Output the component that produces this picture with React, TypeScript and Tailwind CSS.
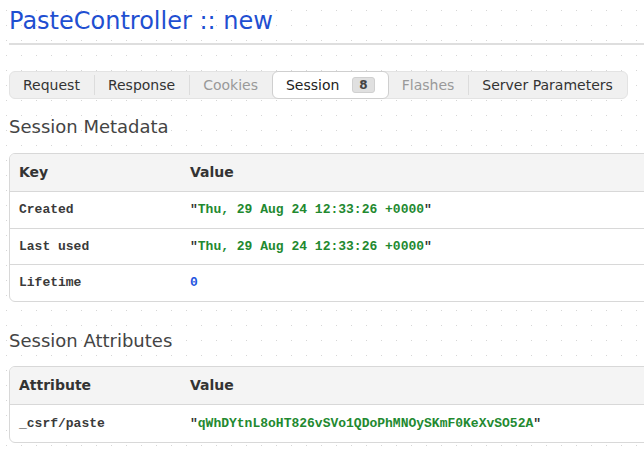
import React from "react";

// ── Profiler session panel ────────────────────────────────────────────────

const sans = "font-['DejaVu_Sans','Noto_Sans',sans-serif]";
const mono = "font-['Liberation_Mono','DejaVu_Sans_Mono',monospace]";

type Tab = { label: string; disabled?: boolean; active?: boolean; badge?: string };

const tabs: Tab[] = [
  { label: "Request" },
  { label: "Response" },
  { label: "Cookies", disabled: true },
  { label: "Session", active: true, badge: "8" },
  { label: "Flashes", disabled: true },
  { label: "Server Parameters" },
];

function Tabs() {
  return (
    <div className="inline-flex items-stretch h-[28px] rounded-md border border-[#e3e3e3] bg-[#f0f0f0]">
      {tabs.map((t, i) => {
        const prevActive = i > 0 && tabs[i - 1].active;
        const showSep = i > 0 && !t.active && !prevActive;
        if (t.active) {
          return (
            <div
              key={t.label}
              className="flex items-center gap-[13px] px-[13px] -my-px bg-white border border-[#cfcfcf] rounded-md text-[14px] text-[#222]"
            >
              <span>{t.label}</span>
              <span className="h-[16px] min-w-[22px] px-1.5 rounded-[3px] bg-[#e0e0e0] border border-[#d0d0d0] text-[12px] font-bold text-[#444] flex items-center justify-center leading-none">
                {t.badge}
              </span>
            </div>
          );
        }
        return (
          <div key={t.label} className="flex items-center">
            {showSep && <span className="w-px h-[20px] bg-[#dcdcdc]" />}
            <span
              className={`pl-[13px] pr-[14px] text-[14px] ${t.disabled ? "text-[#999]" : "text-[#333]"}`}
            >
              {t.label}
            </span>
          </div>
        );
      })}
    </div>
  );
}

function Str({ v }: { v: string }) {
  return (
    <span className="text-[#333]">
      "<span className="text-[#22892f]">{v}</span>"
    </span>
  );
}

type Row = { k: string; v: React.ReactNode };

function Table({ head, rows }: { head: string; rows: Row[] }) {
  return (
    <div className="w-[700px] rounded-md border border-[#d8d8d8] bg-white overflow-hidden">
      <div className="flex h-[38px] items-center bg-[#f4f4f4] border-b border-[#d8d8d8] text-[14px] font-bold text-[#333]">
        <div className="w-[171px] pl-[9px]">{head}</div>
        <div className="pl-[9px]">Value</div>
      </div>
      {rows.map((r, i) => (
        <div
          key={r.k}
          className={`flex items-center text-[13px] font-bold ${mono} ${i === 0 ? "h-[37px]" : "h-[36px]"} ${
            i < rows.length - 1 ? "border-b border-[#d8d8d8]" : ""
          }`}
        >
          <div className="w-[171px] pl-[9px] text-[#3a3a3a]">{r.k}</div>
          <div className="pl-[9px]">{r.v}</div>
        </div>
      ))}
    </div>
  );
}

export default function App() {
  return (
    <div
      className={`w-[644px] h-[459px] overflow-hidden bg-white bg-[radial-gradient(circle,#d6d6d6_0.8px,transparent_1px)] bg-[length:15px_15px] bg-[position:-1px_3px] ${sans}`}
    >
      <div className="w-[700px] pl-[9px]">
        <h1 className="pt-[4px] text-[24px] leading-[34px] text-[#1f4fd1]">PasteController :: new</h1>
        <div className="mt-[5px] h-[2px] bg-[#dedede]" />

        <div className="mt-[26px]">
          <Tabs />
        </div>

        <h2 className="mt-[15px] text-[18px] leading-[26px] text-[#444]">Session Metadata</h2>
        <div className="mt-[13px]">
          <Table
            head="Key"
            rows={[
              { k: "Created", v: <Str v="Thu, 29 Aug 24 12:33:26 +0000" /> },
              { k: "Last used", v: <Str v="Thu, 29 Aug 24 12:33:26 +0000" /> },
              { k: "Lifetime", v: <span className="text-[#1f55e0]">0</span> },
            ]}
          />
        </div>

        <h2 className="mt-[26px] text-[18px] leading-[26px] text-[#444]">Session Attributes</h2>
        <div className="mt-[12px]">
          <Table
            head="Attribute"
            rows={[
              { k: "_csrf/paste", v: <Str v="qWhDYtnL8oHT826vSVo1QDoPhMNOySKmF0KeXvSO52A" /> },
            ]}
          />
        </div>
      </div>
    </div>
  );
}
